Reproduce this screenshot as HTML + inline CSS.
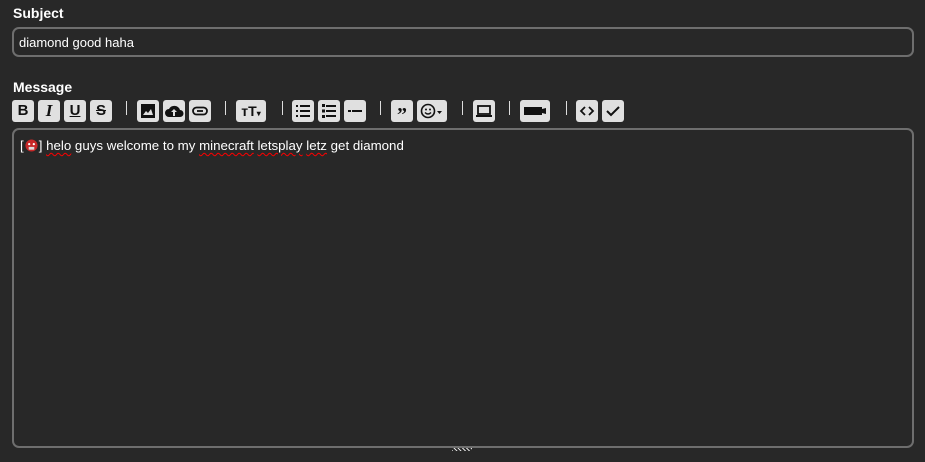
<!DOCTYPE html>
<html><head><style>
body{margin:0;width:925px;height:462px;background:#282828;font-family:"Liberation Sans",sans-serif;color:#fff;position:relative;overflow:hidden}
.lbl{position:absolute;left:13px;font-weight:bold;font-size:14px}
.box{position:absolute;left:12px;width:898px;border:2px solid #6e6e6e;border-radius:7px;background:#282828;box-sizing:border-box}
.b{position:absolute;top:100px;width:22px;height:22px;background:#e0e0e0;border-radius:3px;color:#111;font-weight:bold;font-size:15px;text-align:center;line-height:22px}
.sep{position:absolute;top:101px;width:1px;height:14px;background:#ddd}
svg{display:block;margin:3px auto}
.sq{text-decoration:underline wavy red;text-decoration-thickness:1px;text-underline-offset:2px}
</style></head><body>
<div class="lbl" style="top:5px">Subject</div>
<div class="box" style="top:27px;width:902px;height:30px;font-size:13px;padding:6px 0 0 5px">diamond good haha</div>
<div class="lbl" style="top:79px">Message</div>

<div class="b" style="left:12px;font-family:'Liberation Sans'">B</div>
<div class="b" style="left:38px;font-style:italic;font-family:'Liberation Serif';font-size:17px">I</div>
<div class="b" style="left:64px;text-decoration:underline">U</div>
<div class="b" style="left:90px;text-decoration:line-through">S</div>
<div class="sep" style="left:126px"></div>
<div class="b" style="left:137px"><svg width="16" height="16" viewBox="0 0 16 16"><rect x="1" y="1" width="14" height="14" fill="#111"/><path d="M3 12l3-4 2 2 3-4 2 6z" fill="#e0e0e0"/></svg></div>
<div class="b" style="left:163px"><svg width="20" height="16" viewBox="0 0 20 16"><path d="M5 14a4 4 0 010-8 6 6 0 0111 1 3.5 3.5 0 010 7z" fill="#111"/><path d="M10 6l-3 3h2v4h2V9h2z" fill="#e0e0e0"/></svg></div>
<div class="b" style="left:189px"><svg width="18" height="16" viewBox="0 0 18 16"><rect x="2" y="4.5" width="14" height="7" rx="3.5" fill="none" stroke="#111" stroke-width="1.8"/><path d="M6 8h6" stroke="#111" stroke-width="1.8"/></svg></div>
<div class="sep" style="left:225px"></div>
<div class="b" style="left:236px;width:30px;font-size:14px">тT<span style="font-size:8px">▾</span></div>
<div class="sep" style="left:282px"></div>
<div class="b" style="left:292px"><svg width="16" height="16" viewBox="0 0 16 16"><g fill="#111"><rect x="1" y="2" width="2" height="2"/><rect x="1" y="7" width="2" height="2"/><rect x="1" y="12" width="2" height="2"/><rect x="5" y="2" width="10" height="2"/><rect x="5" y="7" width="10" height="2"/><rect x="5" y="12" width="10" height="2"/></g></svg></div>
<div class="b" style="left:318px"><svg width="16" height="16" viewBox="0 0 16 16"><g fill="#111"><rect x="1" y="1" width="3" height="3"/><rect x="1" y="6.5" width="3" height="3"/><rect x="1" y="12" width="3" height="3"/><rect x="5" y="2" width="10" height="2"/><rect x="5" y="7" width="10" height="2"/><rect x="5" y="12" width="10" height="2"/></g></svg></div>
<div class="b" style="left:344px"><svg width="16" height="16" viewBox="0 0 16 16"><rect x="1" y="7" width="3" height="2" fill="#111"/><rect x="5" y="7" width="10" height="2" fill="#111"/></svg></div>
<div class="sep" style="left:380px"></div>
<div class="b" style="left:391px;font-size:20px;line-height:30px;font-family:'Liberation Serif'">”</div>
<div class="b" style="left:417px;width:30px"><svg width="24" height="16" viewBox="0 0 24 16"><circle cx="8" cy="8" r="6.5" fill="none" stroke="#111" stroke-width="1.6"/><circle cx="6" cy="6.5" r="1" fill="#111"/><circle cx="10" cy="6.5" r="1" fill="#111"/><path d="M5 9.5q3 3 6 0" fill="none" stroke="#111" stroke-width="1.5"/><path d="M17 8h5l-2.5 3z" fill="#111"/></svg></div>
<div class="sep" style="left:462px"></div>
<div class="b" style="left:473px"><svg width="18" height="16" viewBox="0 0 18 16"><rect x="3" y="3" width="12" height="8" fill="none" stroke="#111" stroke-width="1.8"/><rect x="1" y="12" width="16" height="2" fill="#111"/></svg></div>
<div class="sep" style="left:509px"></div>
<div class="b" style="left:520px;width:30px"><svg width="26" height="16" viewBox="0 0 26 16"><rect x="2" y="4" width="18" height="8" fill="#111"/><path d="M20 6l4-1v6l-4-1z" fill="#111"/></svg></div>
<div class="sep" style="left:566px"></div>
<div class="b" style="left:576px"><svg width="16" height="16" viewBox="0 0 16 16"><path d="M6 4L2 8l4 4M10 4l4 4-4 4" fill="none" stroke="#111" stroke-width="1.8"/></svg></div>
<div class="b" style="left:602px"><svg width="16" height="16" viewBox="0 0 16 16"><path d="M2 8l4 4 8-8" fill="none" stroke="#111" stroke-width="2"/></svg></div>

<div class="box" style="top:128px;width:902px;height:320px;font-size:13.3px;padding:8px 0 0 6px">[<svg style="display:inline-block;margin:0 1px;vertical-align:-2px" width="13" height="13" viewBox="0 0 14 14"><circle cx="7" cy="7" r="6.5" fill="#c62828"/><rect x="4" y="8.5" width="6" height="3" fill="#ddd"/><circle cx="4.5" cy="5.5" r="1.2" fill="#fff"/><circle cx="9.5" cy="5.5" r="1.2" fill="#fff"/></svg>] <span class="sq">helo</span> guys welcome to my <span class="sq">minecraft</span> <span class="sq">letsplay</span> <span class="sq">letz</span> get diamond</div>
<div style="position:absolute;left:452px;top:448px;width:20px;height:3px;background:repeating-linear-gradient(45deg,#ddd 0 1px,transparent 1px 3px)"></div>
</body></html>
